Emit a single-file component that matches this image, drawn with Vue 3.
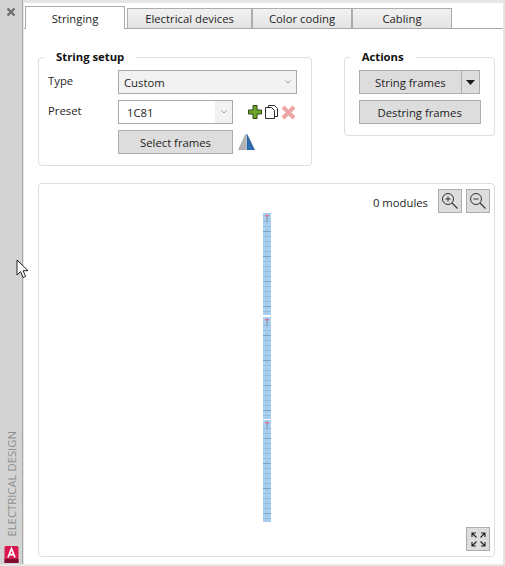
<template>
  <div class="window">
    <aside class="sidebar">
      <svg class="close" width="10" height="10" viewBox="0 0 10 10">
        <path d="M1.5 1.5l7 7M8.5 1.5l-7 7" stroke="#6e6e6e" stroke-width="2.4" />
      </svg>
      <span class="side-title">ELECTRICAL DESIGN</span>
      <svg class="logo" width="15" height="17" viewBox="0 0 15 17">
        <rect x="0.5" y="0" width="14" height="17" rx="1.5" fill="#d8174f" />
        <rect x="0.5" y="13" width="14" height="4" fill="#7c0f30" />
        <path d="M4 11.5L7.5 2.5L11 11.5M5.3 8.7H9.7" fill="none" stroke="#fff" stroke-width="1.7" />
      </svg>
    </aside>

    <main class="content">
      <nav class="tabs">
        <div v-for="(tab, i) in tabs" :key="tab.label" class="tab" :class="{ active: i === 0 }" :style="{ width: tab.width + 'px' }">
          {{ tab.label }}
        </div>
      </nav>

      <section class="setup">
        <fieldset class="group string-setup">
          <legend>String setup</legend>
          <div class="form-row">
            <label>Type</label>
            <div class="combo wide">
              <span>Custom</span>
              <svg class="chev" width="6" height="4" viewBox="0 0 6 4"><path d="M0.5 0.5L3 3L5.5 0.5" fill="none" stroke="#a0a0a0" /></svg>
            </div>
          </div>
          <div class="form-row">
            <label>Preset</label>
            <div class="combo editable">
              <span>1C81</span>
              <i class="combo-btn">
                <svg width="6" height="4" viewBox="0 0 6 4"><path d="M0.5 0.5L3 3L5.5 0.5" fill="none" stroke="#a0a0a0" /></svg>
              </i>
            </div>
            <div class="preset-icons">
              <svg width="14" height="14" viewBox="0 0 14 14">
                <path d="M5 0.5h4v4.5h4.5v4H9v4.5H5V9H0.5V5H5z" fill="#6fa42c" stroke="#2f4d14" stroke-width="1" />
              </svg>
              <svg width="13" height="14" viewBox="0 0 13 14">
                <path d="M3.5 2.5V0.5h6l3 3v8h-3" fill="#fff" stroke="#2e2e2e" />
                <path d="M0.5 2.5h6l3 3v8h-9z" fill="#fff" stroke="#2e2e2e" />
              </svg>
              <svg width="15" height="15" viewBox="0 0 15 15">
                <path d="M2 2l11 11M13 2L2 13" stroke="#eda5a5" stroke-width="4" />
              </svg>
            </div>
          </div>
          <div class="form-row">
            <button class="btn select-btn">Select frames</button>
            <svg class="mirror" width="17" height="16" viewBox="0 0 17 16">
              <path d="M7.5 0.5V16H0.5z" fill="#b4b4b4" stroke="#a0a0a0" stroke-width="0.7" />
              <path d="M9 0.5V16H16.5z" fill="#2f6db0" stroke="#1f4f8a" stroke-width="0.7" />
            </svg>
          </div>
        </fieldset>

        <fieldset class="group actions">
          <legend>Actions</legend>
          <div class="split">
            <button class="btn split-main">String frames</button>
            <button class="btn split-arrow">
              <svg width="9" height="5" viewBox="0 0 9 5"><path d="M0 0h9L4.5 5z" fill="#1c1c1c" /></svg>
            </button>
          </div>
          <button class="btn destring">Destring frames</button>
        </fieldset>
      </section>

      <section class="preview">
        <div class="preview-bar">
          <span class="count">0 modules</span>
          <button class="icon-btn">
            <svg width="18" height="18" viewBox="0 0 18 18">
              <circle cx="7" cy="7" r="5.5" fill="none" stroke="#333" />
              <path d="M11 11l5.5 5.5" stroke="#333" stroke-width="1.1" />
              <path d="M4.5 7h5M7 4.5v5" stroke="#333" />
            </svg>
          </button>
          <button class="icon-btn">
            <svg width="18" height="18" viewBox="0 0 18 18">
              <circle cx="7" cy="7" r="5.5" fill="none" stroke="#333" />
              <path d="M11 11l5.5 5.5" stroke="#333" stroke-width="1.1" />
              <path d="M4.5 7h5" stroke="#333" />
            </svg>
          </button>
        </div>

        <div class="strip">
          <svg v-for="seg in 3" :key="seg" class="segment" width="8" height="102" viewBox="0 0 8 102">
            <rect width="8" height="102" fill="#a9d0f1" />
            <line x1="4" x2="4" y1="0" y2="102" stroke="#9cc4e2" stroke-width="1" />
            <line v-for="(y, i) in rows" :key="y" x1="0" x2="8" :y1="y" :y2="y" :stroke="i % 5 === 2 ? '#7f9fbc' : '#94bcdc'" stroke-width="1" />
            <rect x="2" y="2" width="4" height="1.5" fill="#e0708f" />
            <rect x="3.5" y="3.5" width="1" height="5" fill="#7d98a8" />
          </svg>
        </div>

        <button class="icon-btn fit">
          <svg width="15" height="15" viewBox="0 0 15 15" fill="none" stroke="#222" stroke-width="1.1">
            <path d="M1 5V1h4M1 1l4.5 4.5M14 5V1h-4M14 1L9.5 5.5M1 10v4h4M1 14l4.5-4.5M14 10v4h-4M14 14L9.5 9.5" />
          </svg>
        </button>
      </section>
    </main>

    <svg class="cursor" width="13" height="20" viewBox="0 0 13 20">
      <path d="M1 1v15l3.6-3.4 2.4 5.9 2.6-1.1-2.5-5.7H12z" fill="#fff" stroke="#222" stroke-width="1" />
    </svg>
  </div>
</template>

<script setup>
const tabs = [
  { label: 'Stringing', width: 100 },
  { label: 'Electrical devices', width: 125 },
  { label: 'Color coding', width: 100 },
  { label: 'Cabling', width: 100 }
]

// horizontal divisions of one panel
const rows = []
for (let y = 8.5; y < 102; y += 5) rows.push(y)
</script>

<style>
html,
body {
  margin: 0;
  background: #fff;
}
</style>

<style scoped>
.window {
  position: relative;
  display: flex;
  width: 505px;
  height: 566px;
  box-sizing: border-box;
  padding-bottom: 2px;
  background: #e6e6e6;
  font-family: "Open Sans", "Noto Sans", sans-serif;
  font-size: 11.3px;
  color: #1e1e1e;
  overflow: hidden;
}

.sidebar {
  display: flex;
  flex-direction: column;
  align-items: center;
  width: 23px;
  flex: none;
  background: #d3d3d3;
  border-right: 1px solid #a8a8a8;
  box-sizing: border-box;
}

.close {
  margin-top: 7px;
}

.side-title {
  margin-top: auto;
  writing-mode: vertical-rl;
  transform: rotate(180deg);
  color: #8b8f8f;
}

.logo {
  margin: 9px 0 1px;
}

.content {
  flex: 1;
  display: flex;
  flex-direction: column;
  margin: 3px 2px 0 1px;
  padding: 3px 8px 7px 0;
  background: #fff;
  min-width: 0;
  position: relative;
}

.tabs {
  display: flex;
  align-items: flex-end;
  height: 22px;
  margin-right: -8px;
  padding-left: 1px;
  border-bottom: 1px solid #a9a9a9;
}

.tab {
  display: flex;
  align-items: center;
  justify-content: center;
  height: 20px;
  border: 1px solid #adadad;
  border-bottom: none;
  box-sizing: border-box;
  background: linear-gradient(#f1f1f1, #e4e4e4);
}

.tab.active {
  height: 23px;
  margin-bottom: -1px;
  margin-right: 2px;
  background: #fff;
}

.setup {
  display: flex;
  gap: 32px;
  align-items: flex-start;
  margin: 20px 0 0 14px;
}

.group {
  margin: 0;
  border: 1px solid #d8e0e4;
  border-radius: 4px;
  box-sizing: border-box;
  min-width: 0;
}

.group legend {
  font-weight: 700;
  line-height: 16px;
  padding: 0 12px;
  color: #111;
}

.string-setup {
  width: 275px;
  height: 117px;
  padding: 5px 14px 0 9px;
}

.string-setup legend {
  margin-left: -4px;
}

.actions {
  width: 152px;
  height: 87px;
  padding: 5px 14px 0 14px;
}

.actions legend {
  margin-left: -9px;
}

.form-row {
  display: flex;
  align-items: center;
  height: 24px;
  margin-bottom: 6px;
}

.form-row label {
  width: 70px;
  flex: none;
  margin-top: -4px;
}

.combo {
  display: flex;
  align-items: center;
  height: 24px;
  box-sizing: border-box;
  border: 1px solid #a9a9a9;
  padding-left: 5px;
  position: relative;
}

.combo.wide {
  width: 180px;
  background: #f2f2f2;
}

.combo.editable {
  width: 115px;
  padding-left: 8px;
  background: #fff;
}

.chev {
  position: absolute;
  right: 5px;
  top: 9px;
}

.combo-btn {
  position: absolute;
  right: 0;
  top: 0;
  bottom: 0;
  width: 17px;
  display: flex;
  align-items: center;
  justify-content: center;
  background: #f2f2f2;
}

.preset-icons {
  display: flex;
  align-items: center;
  gap: 3px;
  margin-left: 15px;
}

.btn {
  height: 24px;
  padding: 0;
  box-sizing: border-box;
  border: 1px solid #adadad;
  background: #dddddd;
  font: inherit;
  color: inherit;
}

.select-btn {
  width: 115px;
  margin-left: 70px;
}

.mirror {
  margin-left: 5px;
}

.split {
  display: flex;
  margin-bottom: 6px;
}

.split-main {
  width: 104px;
}

.split-arrow {
  width: 18px;
  border-left: none;
  display: flex;
  align-items: center;
  justify-content: center;
}

.destring {
  display: block;
  width: 122px;
}

.preview {
  position: relative;
  flex: 1;
  margin: 17px 0 0 14px;
  border: 1px solid #d8e0e4;
  border-radius: 4px;
  box-sizing: border-box;
}

.preview-bar {
  display: flex;
  align-items: center;
  justify-content: flex-end;
  gap: 4px;
  padding: 5px 4px 0 0;
}

.count {
  margin: 3px 6px 0 0;
}

.icon-btn {
  display: flex;
  align-items: center;
  justify-content: center;
  width: 24px;
  height: 24px;
  padding: 0;
  box-sizing: border-box;
  border: 1px solid #adadad;
  background: #dddddd;
}

.strip {
  display: flex;
  flex-direction: column;
  align-items: center;
  gap: 1.5px;
}

.segment {
  display: block;
}

.fit {
  position: absolute;
  right: 4px;
  bottom: 5px;
}

.cursor {
  position: absolute;
  left: 16px;
  top: 259px;
}
</style>
